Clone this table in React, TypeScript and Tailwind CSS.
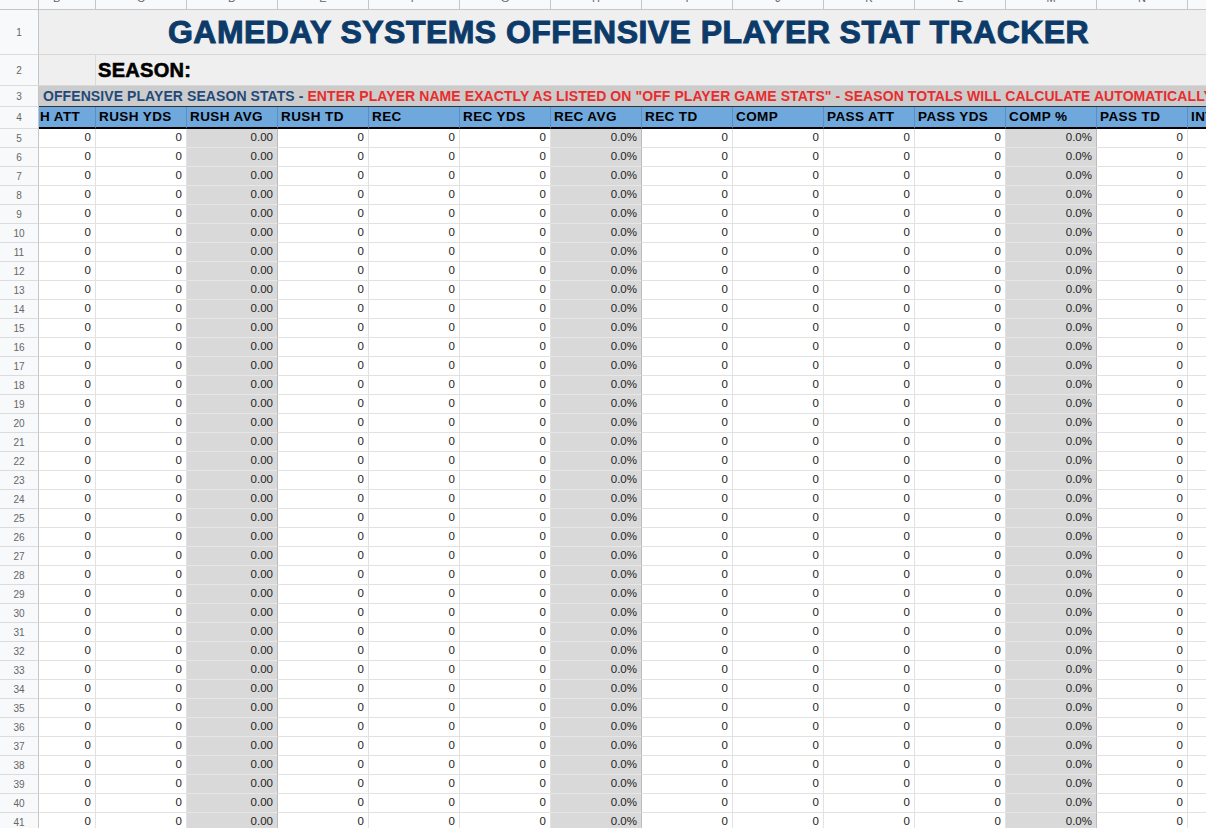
import React from 'react';

type Col = {
  key: string;
  head: string;
  val: string;
  shade?: boolean;
  first?: boolean;
};

// columns B..O, B is scrolled so only part of its header shows
const COLS: Col[] = [
  { key: 'B', head: 'H ATT', val: '0', first: true },
  { key: 'C', head: 'RUSH YDS', val: '0' },
  { key: 'D', head: 'RUSH AVG', val: '0.00', shade: true },
  { key: 'E', head: 'RUSH TD', val: '0' },
  { key: 'F', head: 'REC', val: '0' },
  { key: 'G', head: 'REC YDS', val: '0' },
  { key: 'H', head: 'REC AVG', val: '0.0%', shade: true },
  { key: 'I', head: 'REC TD', val: '0' },
  { key: 'J', head: 'COMP', val: '0' },
  { key: 'K', head: 'PASS ATT', val: '0' },
  { key: 'L', head: 'PASS YDS', val: '0' },
  { key: 'M', head: 'COMP %', val: '0.0%', shade: true },
  { key: 'N', head: 'PASS TD', val: '0' },
  { key: 'O', head: 'INT', val: '0' },
];

const ROWS = Array.from({ length: 37 }, (_, i) => i + 5);

/**
 * Row number cell (left gutter)
 */
function RowNum({ n }: { n?: number }) {
  return (
    <div className="w-[39px] shrink-0 bg-[#f8f9fa] border-r border-b border-r-[#c4c7c5] border-b-[#dcdcdc] text-[10px] text-[#666] flex items-center justify-center">
      {n}
    </div>
  );
}

export default function App() {
  return (
    <div className="w-[1206px] h-[828px] overflow-hidden bg-white font-['Liberation_Sans',Arial,sans-serif]">
      {/* Column letters (scrolled, only the bottom shows) */}
      <div className="flex w-max h-[10px]">
        <div className="w-[39px] shrink-0 bg-[#f8f9fa] border-r border-b border-[#c4c7c5]" />
        {COLS.map((c) => (
          <div
            key={c.key}
            className={`${c.first ? 'w-[57px] justify-start pl-[14px]' : 'w-[91px] justify-center'} shrink-0 bg-[#f8f9fa] border-r border-b border-[#c4c7c5] overflow-hidden flex`}
          >
            <span className="block text-[11px] leading-[12px] -mt-[8px] text-[#666]">{c.key}</span>
          </div>
        ))}
      </div>

      {/* Row 1 - title */}
      <div className="flex w-max h-[45px]">
        <RowNum n={1} />
        <div className="w-[1240px] shrink-0 bg-[#efefef] border-b border-[#d6d6d6] flex items-center pl-[129px]">
          <span className="text-[32px] font-bold leading-none whitespace-nowrap tracking-[0.45px] text-[#0d3b69] [-webkit-text-stroke:1px_#0d3b69]">
            GAMEDAY SYSTEMS OFFENSIVE PLAYER STAT TRACKER
          </span>
        </div>
      </div>

      {/* Row 2 - season */}
      <div className="flex w-max h-[31px]">
        <RowNum n={2} />
        <div className="w-[57px] shrink-0 bg-[#efefef] border-r border-b border-[#dadada]" />
        <div className="w-[1183px] shrink-0 bg-[#efefef] border-b border-[#dadada] flex items-center pl-[2px]">
          <span className="text-[20px] font-bold leading-none tracking-[0.3px] text-black [-webkit-text-stroke:0.6px_#000]">
            SEASON:
          </span>
        </div>
      </div>

      {/* Row 3 - instructions */}
      <div className="flex w-max h-[21px]">
        <RowNum n={3} />
        <div className="w-[1240px] shrink-0 bg-[#cccccc] border-b border-[#333] flex items-center pl-[4px] whitespace-nowrap text-[14px] tracking-[0.08px] font-bold leading-none">
          <span className="text-[#1f4a7a]">OFFENSIVE PLAYER SEASON STATS - </span>
          <span className="text-[#ea2b2b]">
            &nbsp;ENTER PLAYER NAME EXACTLY AS LISTED ON "OFF PLAYER GAME STATS" - SEASON TOTALS WILL CALCULATE AUTOMATICALLY
          </span>
        </div>
      </div>

      {/* Row 4 - column headers */}
      <div className="flex w-max h-[22px]">
        <RowNum n={4} />
        {COLS.map((c) => (
          <div
            key={c.key}
            className={`${c.first ? 'w-[57px] pl-[1px]' : 'w-[91px] pl-[3px]'} shrink-0 bg-[#6fa8dc] border-r border-r-[#5b8fc4] border-b-2 border-b-black overflow-hidden flex items-center`}
          >
            <span className="whitespace-nowrap text-[13.5px] tracking-[0.4px] font-bold leading-none text-black">
              {c.head}
            </span>
          </div>
        ))}
      </div>

      {/* Data rows */}
      {ROWS.map((n) => (
        <div key={n} className="flex w-max h-[19px]">
          <RowNum n={n} />
          {COLS.map((c) => (
            <div
              key={c.key}
              className={`${c.first ? 'w-[57px]' : 'w-[91px]'} ${
                c.shade ? 'bg-[#d9d9d9] border-r-[#bcbcbc] border-b-[#e6e6e6]' : 'bg-white border-r-[#e2e2e2] border-b-[#e2e2e2]'
              } shrink-0 border-r border-b flex items-center justify-end pr-[4px] text-[11.5px] text-[#222]`}
            >
              {c.val}
            </div>
          ))}
        </div>
      ))}
    </div>
  );
}
